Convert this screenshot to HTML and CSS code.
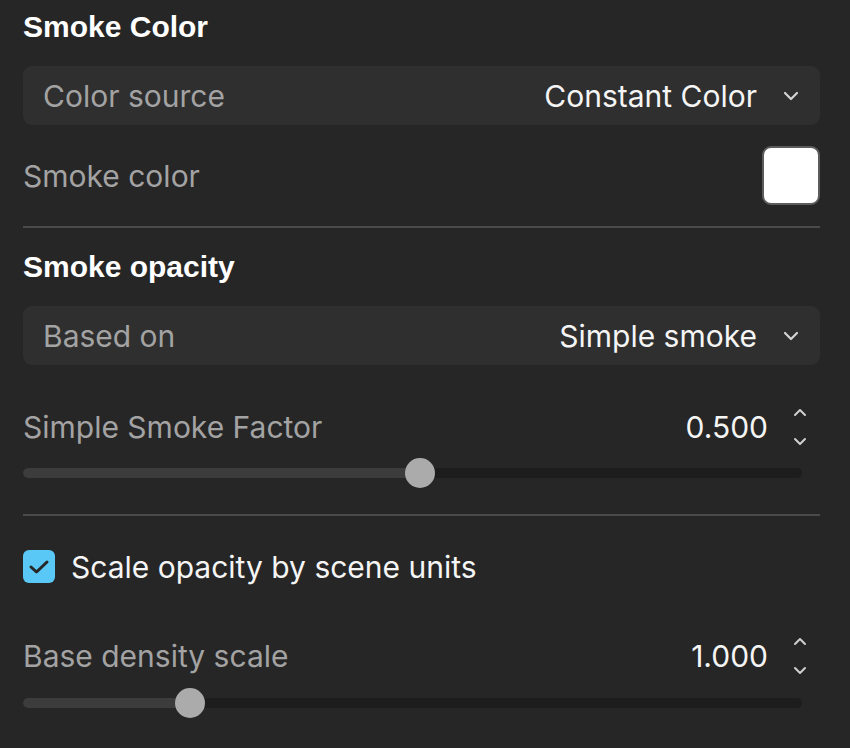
FILE: index.html
```html
<!DOCTYPE html>
<html>
<head>
<meta charset="utf-8">
<link rel="stylesheet" href="styles.css">
</head>
<body>
<div class="panel">
  <div class="section-title title-first">Smoke Color</div>
  <div class="dropdown">
    <span class="dd-label">Color source</span>
    <span class="dd-value">Constant Color</span>
    <svg class="dd-chevron" width="16" height="10" viewBox="0 0 16 10"><path d="M2 2 L8 8 L14 2" fill="none" stroke="#d4d4d4" stroke-width="2.2" stroke-linecap="round" stroke-linejoin="round"/></svg>
  </div>
  <div class="color-row">
    <span class="label">Smoke color</span>
    <span class="swatch"></span>
  </div>
  <div class="divider divider-first"></div>
  <div class="section-title title-second">Smoke opacity</div>
  <div class="dropdown">
    <span class="dd-label">Based on</span>
    <span class="dd-value">Simple smoke</span>
    <svg class="dd-chevron" width="16" height="10" viewBox="0 0 16 10"><path d="M2 2 L8 8 L14 2" fill="none" stroke="#d4d4d4" stroke-width="2.2" stroke-linecap="round" stroke-linejoin="round"/></svg>
  </div>
  <div class="num-row num-row-first">
    <span class="label">Simple Smoke Factor</span>
    <span class="num-value">0.500</span>
    <span class="spinner">
      <svg width="14" height="9" viewBox="0 0 14 9"><path d="M2 7 L7 2 L12 7" fill="none" stroke="#cfcfcf" stroke-width="2" stroke-linecap="round" stroke-linejoin="round"/></svg>
      <svg width="14" height="9" viewBox="0 0 14 9"><path d="M2 2 L7 7 L12 2" fill="none" stroke="#cfcfcf" stroke-width="2" stroke-linecap="round" stroke-linejoin="round"/></svg>
    </span>
  </div>
  <div class="slider slider-first">
    <div class="track">
      <div class="fill" style="width: 397px"></div>
      <div class="thumb" style="left: 382px"></div>
    </div>
  </div>
  <div class="divider divider-second"></div>
  <div class="check-row">
    <span class="checkbox">
      <svg width="22" height="16" viewBox="0 0 22 16"><path d="M3 8 L8.5 13 L19 3" fill="none" stroke="#262626" stroke-width="3" stroke-linecap="round" stroke-linejoin="round"/></svg>
    </span>
    <span class="check-label">Scale opacity by scene units</span>
  </div>
  <div class="num-row num-row-second">
    <span class="label">Base density scale</span>
    <span class="num-value">1.000</span>
    <span class="spinner">
      <svg width="14" height="9" viewBox="0 0 14 9"><path d="M2 7 L7 2 L12 7" fill="none" stroke="#cfcfcf" stroke-width="2" stroke-linecap="round" stroke-linejoin="round"/></svg>
      <svg width="14" height="9" viewBox="0 0 14 9"><path d="M2 2 L7 7 L12 2" fill="none" stroke="#cfcfcf" stroke-width="2" stroke-linecap="round" stroke-linejoin="round"/></svg>
    </span>
  </div>
  <div class="slider slider-second">
    <div class="track">
      <div class="fill" style="width: 167px"></div>
      <div class="thumb" style="left: 152px"></div>
    </div>
  </div>
</div>
</body>
</html>
```
FILE: styles.css
```css
html, body {
  margin: 0;
  padding: 0;
  background: #262626;
}
body {
  font-family: Inter, "Noto Sans", sans-serif;
  width: 850px;
  height: 748px;
  overflow: hidden;
}
.panel {
  display: flex;
  flex-direction: column;
  margin-left: 23px;
  width: 797px;
}
.section-title {
  font-family: "Liberation Sans", Arial, sans-serif;
  font-weight: bold;
  font-size: 30px;
  color: #ffffff;
  display: flex;
  align-items: center;
}
.title-first {
  height: 54px;
  margin-bottom: 12px;
}
.title-second {
  height: 78px;
}
.dropdown {
  height: 59px;
  background: #2f2f2f;
  border-radius: 9px;
  display: flex;
  align-items: center;
  padding: 0 21px 0 20px;
  font-size: 30px;
}
.dd-label {
  color: #a3a3a3;
  flex: 1;
}
.dd-value {
  color: #f5f5f5;
  margin-right: 26px;
}
.dd-chevron {
  display: block;
}
.label {
  color: #a3a3a3;
  font-size: 30px;
  flex: 1;
}
.color-row {
  margin-top: 21px;
  height: 59px;
  display: flex;
  align-items: center;
}
.swatch {
  width: 54px;
  height: 55px;
  background: #ffffff;
  border: 2px solid #5c5c5c;
  border-radius: 9px;
}
.divider {
  height: 2px;
  background: #4a4a4a;
}
.divider-first {
  margin-top: 21px;
}
.divider-second {
  margin-top: 26px;
}
.num-row {
  height: 38px;
  display: flex;
  align-items: center;
  padding-right: 13px;
}
.num-row-first {
  margin-top: 43px;
}
.num-row-second {
  margin-top: 54px;
}
.num-value {
  color: #f5f5f5;
  font-size: 30px;
  margin-right: 25px;
}
.spinner {
  display: flex;
  flex-direction: column;
  justify-content: space-between;
  height: 38px;
}
.spinner svg {
  display: block;
}
.slider {
  height: 30px;
  display: flex;
  align-items: center;
  width: 779px;
}
.slider-first {
  margin-top: 12px;
}
.slider-second {
  margin-top: 13px;
}
.track {
  position: relative;
  width: 100%;
  height: 10px;
  border-radius: 5px;
  background: #1d1d1d;
}
.fill {
  height: 10px;
  border-radius: 5px 0 0 5px;
  background: #3c3c3c;
}
.thumb {
  position: absolute;
  top: -10px;
  width: 30px;
  height: 30px;
  border-radius: 50%;
  background: #ababab;
}
.check-row {
  margin-top: 34px;
  height: 33px;
  display: flex;
  align-items: center;
}
.checkbox {
  width: 32px;
  height: 33px;
  border-radius: 6px;
  background: #5ac8f7;
  display: flex;
  align-items: center;
  justify-content: center;
  margin-right: 16px;
}
.checkbox svg {
  display: block;
}
.check-label {
  color: #f5f5f5;
  font-size: 30px;
}
```
